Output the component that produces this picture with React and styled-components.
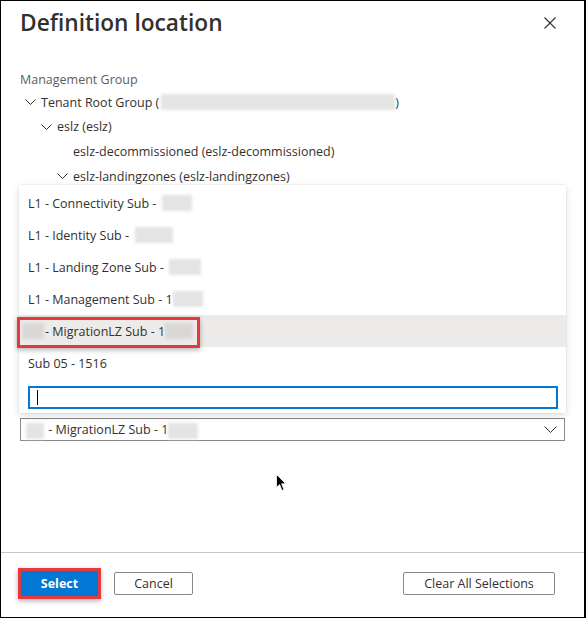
import React from "react";
import styled, { createGlobalStyle } from "styled-components";

const GlobalStyle = createGlobalStyle`
  html, body { margin: 0; padding: 0; background: #fff; }
  body { font-family: "Open Sans", "Noto Sans", sans-serif; }
  * { box-sizing: border-box; }
`;

const Window = styled.div`
  position: relative;
  width: 586px;
  height: 618px;
  border: 1px solid #000;
  border-right-width: 2px;
  background: #fff;
  display: flex;
  flex-direction: column;
  font-family: "Open Sans", "Noto Sans", sans-serif;
  color: #323130;
  overflow: hidden;
`;

const Header = styled.header`
  height: 44px;
  flex: none;
  display: flex;
  align-items: center;
  justify-content: space-between;
  padding: 0 28px 0 19px;
`;

const Title = styled.h1`
  margin: 0;
  font-size: 22.7px;
  line-height: 32px;
  font-weight: 600;
  color: #323130;
`;

const CloseButton = styled.button`
  width: 12px;
  height: 12px;
  padding: 0;
  border: 0;
  background: none;
  display: flex;
  color: #323130;
`;

const Body = styled.main`
  flex: 1;
  display: flex;
  flex-direction: column;
  padding: 25px 19px 0;
`;

const Label = styled.div`
  font-size: 12.5px;
  line-height: 20px;
  color: #605e5c;
`;

const TreeRow = styled.div`
  height: 24.6px;
  display: flex;
  align-items: center;
  padding-left: ${(p) => 5 + p.$level * 16}px;
  font-size: 12.5px;
  white-space: nowrap;
`;

const ChevronSlot = styled.span`
  width: 16px;
  flex: none;
  display: flex;
  align-items: center;
`;

const Blur = styled.span`
  display: inline-block;
  width: ${(p) => p.$w}px;
  height: 16px;
  margin-left: ${(p) => p.$ml || 0}px;
  margin-right: ${(p) => p.$mr || 0}px;
  background: ${(p) => (p.$dark ? "#d9d8d6" : "#e4e4e4")};
  filter: blur(1.4px);
  vertical-align: middle;
`;

const Field = styled.div`
  position: relative;
  margin-top: 230px;
`;

const Combo = styled.div`
  height: 23px;
  border: 1px solid #8a8886;
  display: flex;
  align-items: center;
  justify-content: space-between;
  padding: 0 7px 0 5px;
  font-size: 12.5px;
  color: #323130;
  white-space: nowrap;
`;

const Popup = styled.div`
  position: absolute;
  left: -1px;
  right: -1px;
  bottom: calc(100% + 5px);
  background: #fff;
  padding: 2px 0 4px;
  box-shadow: 0 3px 8px rgba(0, 0, 0, 0.12), 0 0 2px rgba(0, 0, 0, 0.1);
  z-index: 2;
`;

const Option = styled.div`
  position: relative;
  height: 32px;
  display: flex;
  align-items: center;
  padding-left: 9px;
  font-size: 12.5px;
  color: #323130;
  white-space: nowrap;
  background: ${(p) => (p.$selected ? "#edebe9" : "transparent")};
`;

const Callout = styled.span`
  position: absolute;
  left: -2px;
  top: 2px;
  width: 183px;
  height: 31px;
  border: 3px solid #e4393d;
  box-shadow: 0 2px 5px rgba(0, 0, 0, 0.3);
  pointer-events: none;
`;

const SearchBox = styled.div`
  margin: 7px 8px 0 9px;
  height: 23px;
  border: 2px solid #0078d4;
  display: flex;
  align-items: center;
  padding-left: 7px;
`;

const Caret = styled.span`
  width: 1px;
  height: 15px;
  background: #000;
`;

const Footer = styled.footer`
  height: 65px;
  flex: none;
  border-top: 1px solid #c8c6c4;
  padding: 15px 29px 0 17px;
`;

const ButtonRow = styled.div`
  height: 31px;
  display: flex;
  align-items: center;
`;

const Frame = styled.div`
  border: 3px solid #e4393d;
  padding: 1px;
  box-shadow: 0 2px 5px rgba(0, 0, 0, 0.3);
  background: #0078d4;
  display: flex;
`;

const Button = styled.button`
  height: 23px;
  width: ${(p) => p.$w}px;
  margin-left: ${(p) => (p.$push ? "auto" : p.$ml ? `${p.$ml}px` : "0")};
  padding: 0;
  border: 1px solid ${(p) => (p.$primary ? "#0078d4" : "#8a8886")};
  border-radius: 2px;
  background: ${(p) => (p.$primary ? "#0078d4" : "#fff")};
  color: ${(p) => (p.$primary ? "#fff" : "#323130")};
  font-family: "Open Sans", "Noto Sans", sans-serif;
  font-size: 12.5px;
  font-weight: ${(p) => (p.$primary ? 700 : 400)};
`;

const Pointer = styled.svg`
  position: absolute;
  left: 275px;
  top: 473px;
  z-index: 5;
`;

const Chevron = ({ w = 11, h = 6 }) => (
  <svg width={w} height={h} viewBox={`0 0 ${w} ${h}`} fill="none">
    <polyline
      points={`0.5,0.5 ${w / 2},${h - 0.5} ${w - 0.5},0.5`}
      stroke="#323130"
      strokeWidth="1"
    />
  </svg>
);

const tree = [
  { level: 0, open: true, label: "Tenant Root Group (", blur: 234, tail: ")" },
  { level: 1, open: true, label: "eslz (eslz)" },
  { level: 2, open: false, label: "eslz-decommissioned (eslz-decommissioned)" },
  { level: 2, open: true, label: "eslz-landingzones (eslz-landingzones)" },
];

const options = [
  { text: "L1 - Connectivity Sub - ", blur: 30, ml: 6 },
  { text: "L1 - Identity Sub - ", blur: 38, ml: 6 },
  { text: "L1 - Landing Zone Sub - ", blur: 32, ml: 5 },
  { text: "L1 - Management Sub - 1", blur: 30, ml: 0 },
  { lead: 22, text: " - MigrationLZ Sub - 1", blur: 28, ml: 0, selected: true },
  { text: "Sub 05 - 1516" },
];

export default function App() {
  return (
    <>
      <GlobalStyle />
      <Window>
        <Header>
          <Title>Definition location</Title>
          <CloseButton aria-label="Close">
            <svg width="12" height="12" viewBox="0 0 12 12">
              <path d="M0.5 0.5 L11.5 11.5 M11.5 0.5 L0.5 11.5" stroke="#323130" strokeWidth="1.1" />
            </svg>
          </CloseButton>
        </Header>

        <Body>
          <Label>Management Group</Label>
          {tree.map((r) => (
            <TreeRow key={r.label} $level={r.level}>
              <ChevronSlot>{r.open && <Chevron />}</ChevronSlot>
              {r.label}
              {r.blur && <Blur $w={r.blur} $ml={2} />}
              {r.tail}
            </TreeRow>
          ))}

          <Field>
            <Popup>
              {options.map((o) => (
                <Option key={o.text} $selected={o.selected}>
                  {o.selected && <Callout />}
                  {o.lead && <Blur $w={o.lead} $dark $ml={-6} $mr={1} />}
                  {o.text}
                  {o.blur && <Blur $w={o.blur} $ml={o.ml} $dark={o.selected} />}
                </Option>
              ))}
              <SearchBox>
                <Caret />
              </SearchBox>
            </Popup>
            <Combo>
              <span>
                <Blur $w={18} $mr={1} />
                {" - MigrationLZ Sub - 1"}
                <Blur $w={30} />
              </span>
              <Chevron w={13} h={7} />
            </Combo>
          </Field>
        </Body>

        <Footer>
          <ButtonRow>
            <Frame>
              <Button $primary $w={75}>Select</Button>
            </Frame>
            <Button $w={79} $ml={13}>Cancel</Button>
            <Button $w={152} $push>Clear All Selections</Button>
          </ButtonRow>
        </Footer>

        <Pointer width="11" height="18" viewBox="0 0 11 18">
          <path
            d="M0.5 0.5 L0.5 13.5 L3.6 10.6 L6 16.5 L8 15.6 L5.6 9.8 L9.8 9.8 Z"
            fill="#000"
            stroke="#fff"
            strokeWidth="0.8"
          />
        </Pointer>
      </Window>
    </>
  );
}
